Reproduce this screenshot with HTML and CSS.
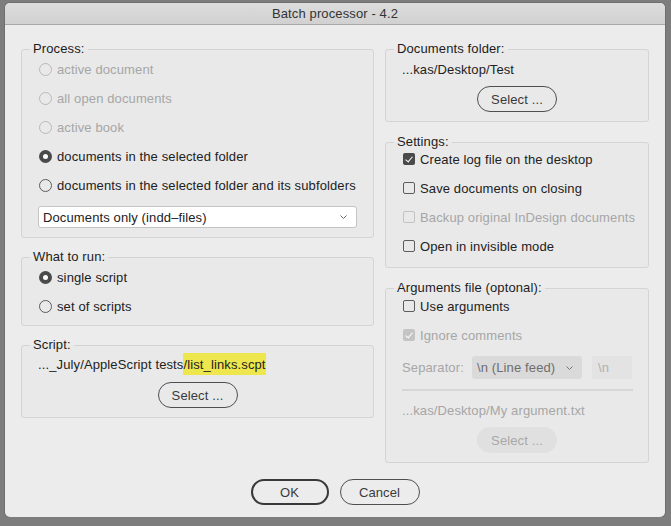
FILE: index.html
```html
<!DOCTYPE html>
<html lang="en">
<head>
  <meta charset="UTF-8">
  <title>Batch processor - 4.2</title>
  <link rel="stylesheet" href="styles.css">
</head>
<body>

  <div class="window">
    <div class="titlebar">Batch processor - 4.2</div>

    <div class="content">
      <div class="columns">

        <!-- LEFT COLUMN -->
        <div class="col col-left">
          <fieldset class="panel">
            <legend>Process:</legend>
            <div class="panel-body body-process">
              <div class="options">
                <div class="option disabled"><span class="radio"></span>active document</div>
                <div class="option disabled"><span class="radio"></span>all open documents</div>
                <div class="option disabled"><span class="radio"></span>active book</div>
                <div class="option"><span class="radio checked"></span>documents in the selected folder</div>
                <div class="option"><span class="radio"></span>documents in the selected folder and its subfolders</div>
              </div>
              <div class="dropdown dropdown-docs">
                <span>Documents only (indd–files)</span>
                <svg width="9" height="6" viewBox="0 0 9 6"><polyline points="1.5,1.5 4.5,4.5 7.5,1.5" fill="none" stroke="#666" stroke-width="1"/></svg>
              </div>
            </div>
          </fieldset>

          <fieldset class="panel panel-run">
            <legend>What to run:</legend>
            <div class="panel-body body-run">
              <div class="options">
                <div class="option"><span class="radio checked"></span>single script</div>
                <div class="option"><span class="radio"></span>set of scripts</div>
              </div>
            </div>
          </fieldset>

          <fieldset class="panel panel-script">
            <legend>Script:</legend>
            <div class="panel-body body-script">
              <div class="path path-script">..._July/AppleScript tests<span class="hl">/list_links.scpt</span></div>
              <button class="btn">Select ...</button>
            </div>
          </fieldset>
        </div>

        <!-- RIGHT COLUMN -->
        <div class="col col-right">
          <fieldset class="panel">
            <legend>Documents folder:</legend>
            <div class="panel-body body-folder">
              <div class="path path-folder">...kas/Desktop/Test</div>
              <button class="btn">Select ...</button>
            </div>
          </fieldset>

          <fieldset class="panel panel-settings">
            <legend>Settings:</legend>
            <div class="panel-body body-settings">
              <div class="checks">
                <div class="option"><span class="check checked"></span>Create log file on the desktop</div>
                <div class="option"><span class="check"></span>Save documents on closing</div>
                <div class="option disabled"><span class="check"></span>Backup original InDesign documents</div>
                <div class="option"><span class="check"></span>Open in invisible mode</div>
              </div>
            </div>
          </fieldset>

          <fieldset class="panel panel-args">
            <legend>Arguments file (optonal):</legend>
            <div class="panel-body body-args">
              <div class="option opt-use"><span class="check"></span>Use arguments</div>
              <div class="option opt-ignore disabled"><span class="check checked"></span>Ignore comments</div>
              <div class="sep-row">
                <span class="sep-label">Separator:</span>
                <div class="dropdown dropdown-sep">
                  <span>\n (Line feed)</span>
                  <svg width="9" height="6" viewBox="0 0 9 6"><polyline points="1.5,1.5 4.5,4.5 7.5,1.5" fill="none" stroke="#777" stroke-width="1"/></svg>
                </div>
                <div class="sep-input">\n</div>
              </div>
              <div class="rule"></div>
              <div class="path path-args">...kas/Desktop/My argument.txt</div>
              <button class="btn btn-disabled">Select ...</button>
            </div>
          </fieldset>
        </div>

      </div>

      <div class="footer">
        <button class="btn btn-default">OK</button>
        <button class="btn">Cancel</button>
      </div>
    </div>
  </div>

</body>
</html>
```

FILE: styles.css
```css
body {
  margin: 0;
  background-color: #7d7d7d;
  font-family: "Liberation Sans", Arial, sans-serif;
  font-size: 13px;
  letter-spacing: 0.12px;
  color: #222;
}

.window {
  margin: 3px 0 0 5px;
  width: 660px;
  height: 514px;
  background-color: #ececec;
  border-radius: 5px;
  overflow: hidden;
  box-shadow: 0 0 0 1px #6f6f6f;
}

.titlebar {
  height: 21px;
  line-height: 21px;
  text-align: center;
  color: #333;
  background: linear-gradient(#dcdcdc, #d1d1d1);
  border-bottom: 1px solid #a9a9a9;
}

.content {
  padding: 16px 16px 0 16px;
}

.columns {
  display: flex;
  gap: 11px;
}

.col {
  display: flex;
  flex-direction: column;
}

.col-left {
  width: 353px;
}

.col-right {
  width: 264px;
}

/* panels */
.panel {
  margin: 0;
  padding: 0;
  min-width: 0;
  border: 1px solid #d4d4d4;
  border-radius: 3px;
  background-color: #e9e9e9;
}

.panel legend {
  margin-left: 8px;
  padding: 0 3px;
  line-height: 16px;
  color: #1c1c1c;
}

.panel-run,
.panel-script {
  margin-top: 11px;
}

.panel-settings,
.panel-args {
  margin-top: 12px;
}

.panel-body {
  display: flex;
  flex-direction: column;
  padding: 0 16px;
}

.body-process { padding-bottom: 9px; }
.body-run { padding-bottom: 7px; }
.body-script { padding-bottom: 9px; }
.body-folder { padding-bottom: 9px; }
.body-settings { padding-bottom: 12px; }
.body-args { padding-bottom: 9px; }

/* options */
.options {
  display: flex;
  flex-direction: column;
  gap: 5px;
}

.checks {
  display: flex;
  flex-direction: column;
  gap: 11px;
}

.option {
  display: flex;
  align-items: center;
  height: 24px;
  white-space: nowrap;
}

.checks .option {
  height: 18px;
}

.option.disabled {
  color: #a6a6a6;
}

.radio {
  box-sizing: border-box;
  width: 13px;
  height: 13px;
  margin: 0 5px 0 1px;
  border: 1px solid #5c5c5c;
  border-radius: 50%;
  flex-shrink: 0;
}

.disabled .radio {
  border-color: #b9b9b9;
}

.radio.checked {
  border: 4.5px solid #4a4a4a;
  background-color: #fff;
}

.check {
  box-sizing: border-box;
  position: relative;
  width: 12px;
  height: 12px;
  margin: 0 5px 0 1px;
  border: 1px solid #5c5c5c;
  border-radius: 2px;
  flex-shrink: 0;
}

.disabled .check {
  border-color: #c2c2c2;
}

.check.checked {
  border: none;
  background-color: #4a4a4a;
}

.disabled .check.checked {
  background-color: #c4c4c4;
}

.check.checked::after {
  content: "";
  position: absolute;
  left: 4px;
  top: 1.5px;
  width: 3px;
  height: 6px;
  border: solid #fff;
  border-width: 0 1.6px 1.6px 0;
  transform: rotate(40deg);
}

/* dropdowns */
.dropdown {
  box-sizing: border-box;
  display: flex;
  align-items: center;
  justify-content: space-between;
  height: 22px;
  padding: 0 8px 0 4px;
  border-radius: 3px;
}

.dropdown-docs {
  margin-top: 9px;
  background-color: #fff;
  border: 1px solid #c4c4c4;
}

.dropdown-sep {
  width: 110px;
  height: 23px;
  padding-left: 5px;
  background-color: #dadada;
  color: #6e6e6e;
}

/* paths and buttons */
.path {
  display: flex;
  align-items: center;
  height: 22px;
  white-space: nowrap;
}

.path-folder {
  height: 24px;
}

.hl {
  display: flex;
  align-items: center;
  height: 22px;
  background-color: #ede64c;
}

.btn {
  box-sizing: border-box;
  align-self: center;
  width: 80px;
  height: 26px;
  margin-top: 7px;
  padding: 0;
  border: 1px solid #4f4f4f;
  border-radius: 13px;
  background-color: transparent;
  font-family: inherit;
  font-size: 13px;
  letter-spacing: 0.12px;
  color: #3a3a3a;
}

.body-folder .btn {
  margin-top: 5px;
}

.btn-disabled {
  margin-top: 8px;
  border-color: #e0e0e0;
  background-color: #e0e0e0;
  color: #a8a8a8;
}

/* arguments panel */
.opt-use {
  height: 20px;
}

.opt-ignore {
  height: 20px;
  margin-top: 9px;
}

.sep-row {
  display: flex;
  align-items: center;
  gap: 10px;
  margin-top: 11px;
}

.sep-label {
  width: 60px;
  color: #a6a6a6;
}

.sep-input {
  box-sizing: border-box;
  width: 40px;
  height: 23px;
  line-height: 23px;
  padding-left: 6px;
  background-color: #e3e3e3;
  color: #b0b0b0;
}

.rule {
  height: 2px;
  margin: 10px 0 0;
  width: 231px;
  background-color: #d6d6d6;
}

.path-args {
  height: 18px;
  margin-top: 10px;
  color: #a6a6a6;
}

/* footer */
.footer {
  display: flex;
  justify-content: center;
  gap: 11px;
  padding-top: 16px;
}

.footer .btn {
  margin-top: 0;
}

.btn-default {
  width: 78px;
  border: 2px solid #393939;
}
```
